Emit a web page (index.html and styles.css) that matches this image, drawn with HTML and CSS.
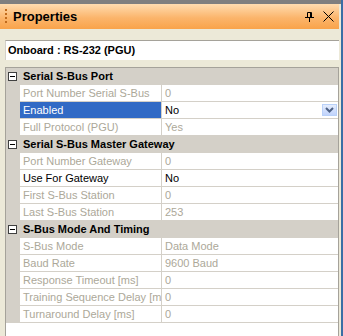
FILE: index.html
```html
<!DOCTYPE html>
<html lang="en">
<head>
  <meta charset="UTF-8">
  <title>Properties</title>
  <link rel="stylesheet" href="styles.css">
</head>
<body>
  <div id="panel">
    <div class="topStrip"></div>
    <div class="titleBar">
      <div class="grip"></div>
      <div class="title">Properties</div>
      <svg class="pin" width="9" height="10" viewBox="0 0 9 10">
        <path d="M2.5 0.5h4M2.5 0.5v5M5.5 0.5v5M6.5 0.5v5M0 5.5h9M4.5 5.5v4.5" stroke="#000" stroke-width="1" fill="none"/>
      </svg>
      <svg class="close" width="11" height="11" viewBox="0 0 11 11">
        <path d="M0.5 0.5l10 10M10.5 0.5l-10 10" stroke="#000" stroke-width="1" fill="none"/>
      </svg>
    </div>
    <div class="content">
      <div class="combo">Onboard : RS-232 (PGU)</div>
      <div class="grid">
        <div class="cat"><span class="toggle"></span>Serial S-Bus Port</div>
        <div class="prop"><div class="name off">Port Number Serial S-Bus</div><div class="value off">0</div></div>
        <div class="prop"><div class="name sel">Enabled</div><div class="value">No<span class="drop"><svg width="9" height="6" viewBox="0 0 9 6"><path d="M1 1l3.5 3.5L8 1" stroke="#4d6185" stroke-width="2" fill="none"/></svg></span></div></div>
        <div class="prop"><div class="name off">Full Protocol (PGU)</div><div class="value off">Yes</div></div>
        <div class="cat"><span class="toggle"></span>Serial S-Bus Master Gateway</div>
        <div class="prop"><div class="name off">Port Number Gateway</div><div class="value off">0</div></div>
        <div class="prop"><div class="name">Use For Gateway</div><div class="value">No</div></div>
        <div class="prop"><div class="name off">First S-Bus Station</div><div class="value off">0</div></div>
        <div class="prop"><div class="name off">Last S-Bus Station</div><div class="value off">253</div></div>
        <div class="cat"><span class="toggle"></span>S-Bus Mode And Timing</div>
        <div class="prop"><div class="name off">S-Bus Mode</div><div class="value off">Data Mode</div></div>
        <div class="prop"><div class="name off">Baud Rate</div><div class="value off">9600 Baud</div></div>
        <div class="prop"><div class="name off">Response Timeout [ms]</div><div class="value off">0</div></div>
        <div class="prop"><div class="name off">Training Sequence Delay [ms]</div><div class="value off">0</div></div>
        <div class="prop"><div class="name off">Turnaround Delay [ms]</div><div class="value off">0</div></div>
        <div class="empty"></div>
      </div>
    </div>
  </div>
</body>
</html>
```

FILE: styles.css
```css
body
{
  margin:0;
  font-family:"Liberation Sans",Arial,sans-serif;
  font-size:11px;
  background-color:#ece9d8;
}
#panel
{
  width:343px;
  height:336px;
  overflow:hidden;
  display:flex;
  flex-direction:column;
  border-right:2px solid #3a6ea5;
  box-sizing:border-box;
}
.topStrip
{
  height:4px;
  background-color:#7f7f7f;
}
.titleBar
{
  height:25px;
  display:flex;
  align-items:center;
  margin-right:2px;
  background:linear-gradient(#ffdcb0,#fbb56c 55%,#f9a34a);
}
.grip
{
  width:2px;
  height:15px;
  margin-left:5px;
  background:repeating-linear-gradient(#c06a1c 0 2px,transparent 2px 4px);
}
.title
{
  margin-left:6px;
  font-size:13px;
  font-weight:bold;
  flex:1;
}
.pin
{
  margin-right:9px;
}
.close
{
  margin-right:5px;
}
.content
{
  flex:1;
  padding:11px 2px 0 5px;
  display:flex;
  flex-direction:column;
  gap:7px;
}
.combo
{
  height:19px;
  line-height:19px;
  background-color:#fff;
  border-top:1px solid #a5a29a;
  border-left:1px solid #d4d0c8;
  padding-left:2px;
  font-weight:bold;
}
.grid
{
  flex:1;
  border:1px solid #a5a29a;
  border-bottom:none;
  background-color:#fff;
}
.cat
{
  height:17px;
  line-height:17px;
  background-color:#d4d0c8;
  font-weight:bold;
  display:flex;
  align-items:center;
}
.toggle
{
  width:9px;
  height:9px;
  border:1px solid #404040;
  box-sizing:border-box;
  margin:0 6px 0 2px;
  position:relative;
  background-color:#fff;
}
.toggle::after
{
  content:"";
  position:absolute;
  left:1px;
  top:3px;
  width:5px;
  height:1px;
  background-color:#000;
}
.prop
{
  height:17px;
  display:grid;
  grid-template-columns:142px 1fr;
  border-left:14px solid #d4d0c8;
}
.name,.value
{
  line-height:16px;
  border-bottom:1px solid #d4d0c8;
  padding-left:3px;
  white-space:nowrap;
  overflow:hidden;
}
.name
{
  border-right:1px solid #d4d0c8;
}
.value
{
  position:relative;
}
.off
{
  color:#aca899;
}
.sel
{
  background-color:#316ac5;
  color:#fff;
}
.drop
{
  position:absolute;
  right:1px;
  top:2px;
  width:15px;
  height:12px;
  box-sizing:border-box;
  border:1px solid #b9d1f9;
  background:linear-gradient(#e4ecfd,#c1d3fb);
  display:flex;
  align-items:center;
  justify-content:center;
}
.empty
{
  flex:1;
}
```
